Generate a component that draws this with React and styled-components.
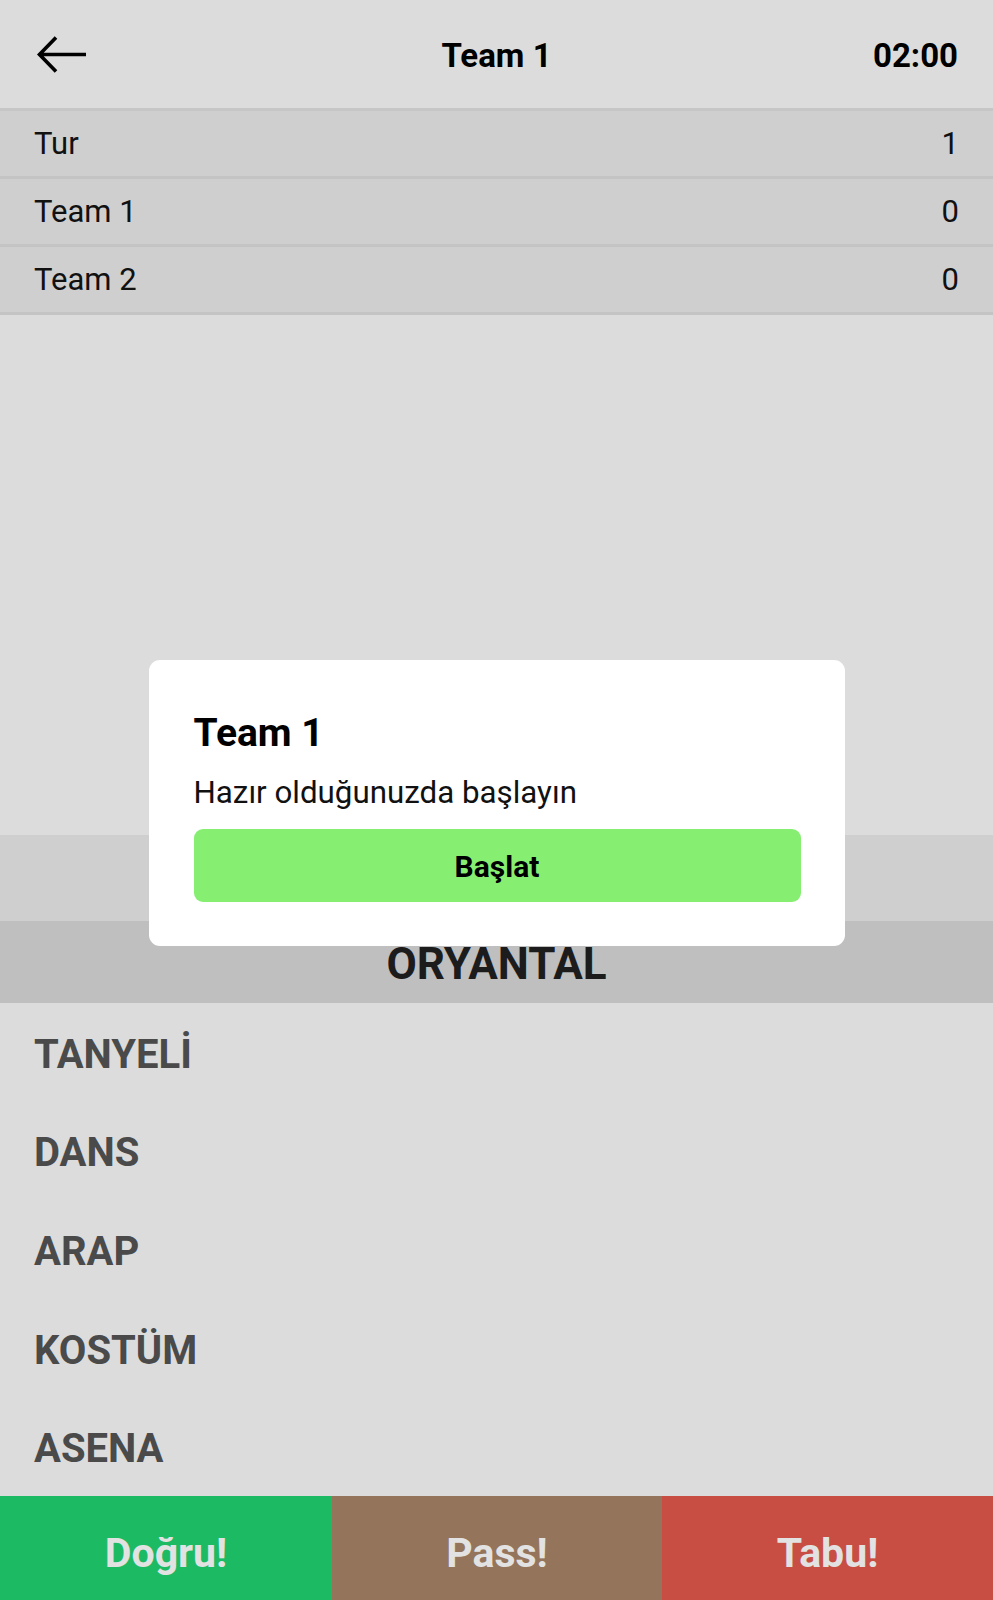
import React from "react";
import styled, { createGlobalStyle } from "styled-components";

const GlobalStyle = createGlobalStyle`
  html, body {
    margin: 0;
    padding: 0;
    background: #dcdcdc;
  }
  * { box-sizing: border-box; }
  body {
    font-family: Roboto, "Noto Sans", "Liberation Sans", sans-serif;
  }
`;

const Page = styled.div`
  width: 993px;
  height: 1600px;
  display: flex;
  flex-direction: column;
  background: #dcdcdc;
  position: relative;
  overflow: hidden;
`;

const Header = styled.header`
  height: 111px;
  flex: none;
  display: flex;
  align-items: center;
  justify-content: space-between;
  padding: 2px 35px 0 36px;
  border-bottom: 3px solid #c6c6c6;
  position: relative;
`;

const BackButton = styled.button`
  border: none;
  background: transparent;
  padding: 0;
  width: 52px;
  height: 40px;
  display: flex;
  align-items: center;
  cursor: pointer;
`;

const HeaderTitle = styled.h1`
  position: absolute;
  left: 0;
  right: 0;
  margin: 0;
  text-align: center;
  font-size: 33px;
  font-weight: 700;
  color: #000;
  pointer-events: none;
`;

const Timer = styled.span`
  font-size: 33px;
  font-weight: 700;
  color: #000;
`;

const ScoreRow = styled.div`
  height: 68px;
  flex: none;
  display: flex;
  align-items: center;
  justify-content: space-between;
  padding: 0 34px;
  background: #cfcfcf;
  border-bottom: 3px solid #c4c4c4;
  font-size: 31px;
  color: #111;
`;

const Spacer = styled.div`
  flex: 1;
`;

const CardBand = styled.div`
  height: 86px;
  flex: none;
  background: #cfcfcf;
`;

const CategoryBand = styled.div`
  height: 82px;
  flex: none;
  background: #bfbfbf;
  display: flex;
  align-items: center;
  justify-content: center;
  padding-top: 3px;
  font-size: 44px;
  font-weight: 700;
  color: #1c1c1c;
`;

const WordList = styled.ul`
  list-style: none;
  margin: 0;
  padding: 0;
  height: 493px;
  flex: none;
  display: flex;
  flex-direction: column;
`;

const Word = styled.li`
  flex: 1;
  display: flex;
  align-items: center;
  padding: 4px 0 0 34px;
  font-size: 40px;
  font-weight: 700;
  color: #4a4a4a;
`;

const ActionBar = styled.div`
  height: 104px;
  flex: none;
  display: grid;
  grid-template-columns: 332px 330px 331px;
`;

const ActionButton = styled.button`
  border: none;
  margin: 0;
  padding: 10px 0 0;
  background: ${(p) => p.$bg};
  color: #e2e2e2;
  font-family: Roboto, "Noto Sans", sans-serif;
  font-size: 41px;
  font-weight: 700;
  display: flex;
  align-items: center;
  justify-content: center;
  cursor: pointer;
`;

const Overlay = styled.div`
  position: absolute;
  inset: 0;
  display: flex;
  align-items: flex-start;
  justify-content: center;
  padding-top: 660px;
`;

const Dialog = styled.div`
  width: 696px;
  background: #fff;
  border-radius: 11px;
  padding: 50px 44px 44px 45px;
  display: flex;
  flex-direction: column;
`;

const DialogTitle = styled.h2`
  margin: 0;
  font-size: 39px;
  line-height: 1.2;
  font-weight: 700;
  color: #000;
`;

const DialogText = styled.p`
  margin: 17px 0 0;
  font-size: 31.3px;
  line-height: 1.2;
  color: #111;
`;

const StartButton = styled.button`
  margin-top: 18px;
  height: 73px;
  border: none;
  border-radius: 9px;
  background: #86ef72;
  font-family: Roboto, "Noto Sans", sans-serif;
  font-size: 30px;
  font-weight: 700;
  color: #000;
  padding-top: 2px;
  cursor: pointer;
`;

const scores = [
  { label: "Tur", value: 1 },
  { label: "Team 1", value: 0 },
  { label: "Team 2", value: 0 },
];

const words = ["TANYELİ", "DANS", "ARAP", "KOSTÜM", "ASENA"];

const actions = [
  { label: "Doğru!", bg: "#1dba64" },
  { label: "Pass!", bg: "#94745a" },
  { label: "Tabu!", bg: "#c84e43" },
];

export default function App() {
  return (
    <>
      <GlobalStyle />
      <Page>
        <Header>
          <BackButton aria-label="Geri">
            <svg width="52" height="40" viewBox="0 0 52 40" fill="none">
              <path
                d="M50 19.5 H4 M20 2.5 L3.5 19.5 L20 36.5"
                stroke="#000"
                strokeWidth="3.6"
                strokeLinejoin="miter"
              />
            </svg>
          </BackButton>
          <HeaderTitle>Team 1</HeaderTitle>
          <Timer>02:00</Timer>
        </Header>
        {scores.map((s) => (
          <ScoreRow key={s.label}>
            <span>{s.label}</span>
            <span>{s.value}</span>
          </ScoreRow>
        ))}
        <Spacer />
        <CardBand />
        <CategoryBand>ORYANTAL</CategoryBand>
        <WordList>
          {words.map((w) => (
            <Word key={w}>{w}</Word>
          ))}
        </WordList>
        <ActionBar>
          {actions.map((a) => (
            <ActionButton key={a.label} $bg={a.bg}>
              {a.label}
            </ActionButton>
          ))}
        </ActionBar>
        <Overlay>
          <Dialog>
            <DialogTitle>Team 1</DialogTitle>
            <DialogText>Hazır olduğunuzda başlayın</DialogText>
            <StartButton>Başlat</StartButton>
          </Dialog>
        </Overlay>
      </Page>
    </>
  );
}
